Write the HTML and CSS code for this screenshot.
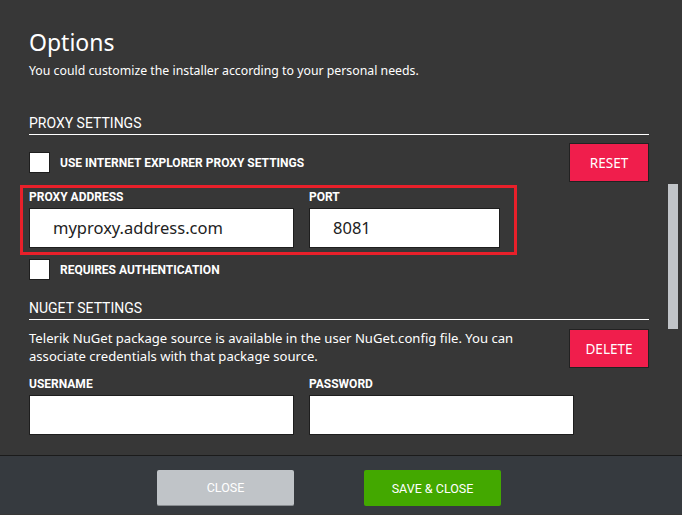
FILE: index.html
```
<!DOCTYPE html>
<html lang="en">
<head>
  <meta charset="UTF-8">
  <title>Options</title>
  <link rel="stylesheet" href="styles.css">
</head>
<body>
  <div class="dialog">
    <div class="content">
      <h1 class="title">Options</h1>
      <p class="subtitle">You could customize the installer according to your personal needs.</p>

      <!-- Proxy -->
      <div class="section-title">PROXY SETTINGS</div>
      <div class="row">
        <label class="check"><span class="box"></span>USE INTERNET EXPLORER PROXY SETTINGS</label>
        <button class="btn-red">RESET</button>
      </div>
      <div class="highlight">
        <div class="field wide">
          <div class="label">PROXY ADDRESS</div>
          <div class="input">myproxy.address.com</div>
        </div>
        <div class="field port">
          <div class="label">PORT</div>
          <div class="input">8081</div>
        </div>
      </div>
      <label class="check auth"><span class="box"></span>REQUIRES AUTHENTICATION</label>

      <!-- NuGet -->
      <div class="section-title nuget">NUGET SETTINGS</div>
      <div class="row top">
        <p class="desc">Telerik NuGet package source is available in the user NuGet.config file. You can associate credentials with that package source.</p>
        <button class="btn-red">DELETE</button>
      </div>
      <div class="fields">
        <div class="field wide">
          <div class="label">USERNAME</div>
          <div class="input"></div>
        </div>
        <div class="field wide">
          <div class="label">PASSWORD</div>
          <div class="input"></div>
        </div>
      </div>
    </div>
    <div class="scrollbar"></div>
    <div class="footer">
      <button class="btn-close">CLOSE</button>
      <button class="btn-save">SAVE &amp; CLOSE</button>
    </div>
  </div>
</body>
</html>
```
FILE: styles.css
```
body {
  margin: 0;
  background-color: #373737;
  color: #ffffff;
  font-family: "Noto Sans", "Open Sans", sans-serif;
}
.dialog {
  position: relative;
  width: 682px;
  height: 515px;
  overflow: hidden;
}
.content {
  height: 455px;
  padding: 0 33px 0 29px;
  box-sizing: border-box;
  overflow: hidden;
}
.title {
  margin: 0;
  padding-top: 26px;
  font-size: 23px;
  font-weight: normal;
  line-height: 32px;
}
.subtitle {
  margin: 4px 0 0;
  font-size: 12.3px;
  line-height: 18px;
}
.section-title {
  margin-top: 34px;
  padding-bottom: 2px;
  border-bottom: 1px solid #ffffff;
  font-family: Roboto, sans-serif;
  font-size: 14px;
  line-height: 18px;
}
.section-title.nuget {
  margin-top: 19px;
}
.row {
  display: flex;
  justify-content: space-between;
  align-items: center;
  margin-top: 8px;
}
.row.top {
  align-items: flex-start;
  margin-top: 9px;
}
.check {
  display: flex;
  align-items: center;
  gap: 10px;
  font-family: Roboto, sans-serif;
  font-weight: bold;
  font-size: 12px;
}
.box {
  width: 19px;
  height: 19px;
  background: #ffffff;
  border: 1px solid #1e1e1e;
}
.check.auth {
  margin-top: 4px;
}
.btn-red {
  width: 80px;
  height: 39px;
  background-color: #f01e4c;
  border: 1px solid #222;
  color: #ffffff;
  font-family: "Noto Sans", sans-serif;
  font-size: 13.5px;
}
.highlight {
  display: flex;
  gap: 15px;
  margin: 3px 0 0 -9px;
  width: 497px;
  height: 70px;
  box-sizing: border-box;
  padding: 2px 0 0 6px;
  border: 3px solid #e8202a;
}
.fields {
  display: flex;
  gap: 15px;
  margin-top: 9px;
}
.field .label {
  font-family: Roboto, sans-serif;
  font-weight: bold;
  font-size: 12px;
  line-height: 14px;
  margin-bottom: 4px;
}
.input {
  height: 38px;
  background: #ffffff;
  border: 1px solid #1e1e1e;
  box-sizing: content-box;
  color: #222;
  font-size: 16.5px;
  line-height: 37px;
  padding-left: 23px;
}
.field.wide .input {
  width: 240px;
}
.field.port .input {
  width: 166px;
}
.desc {
  margin: 0;
  width: 500px;
  font-size: 13.1px;
  line-height: 18px;
}
.scrollbar {
  position: absolute;
  left: 668px;
  top: 184px;
  width: 10px;
  height: 145px;
  background: #c1c4c8;
}
.footer {
  display: flex;
  justify-content: center;
  gap: 70px;
  height: 59px;
  padding-top: 14px;
  padding-right: 24px;
  box-sizing: border-box;
  background-color: #363a3f;
  border-top: 1px solid #1b1b1b;
}
.btn-close, .btn-save {
  width: 137px;
  height: 36px;
  border: none;
  border-radius: 2px;
  color: #ffffff;
  font-family: Roboto, sans-serif;
  font-size: 12.5px;
}
.btn-close {
  background-color: #c0c4c8;
  border-bottom: 1px solid #888c90;
}
.btn-save {
  background-color: #43a800;
}
```
